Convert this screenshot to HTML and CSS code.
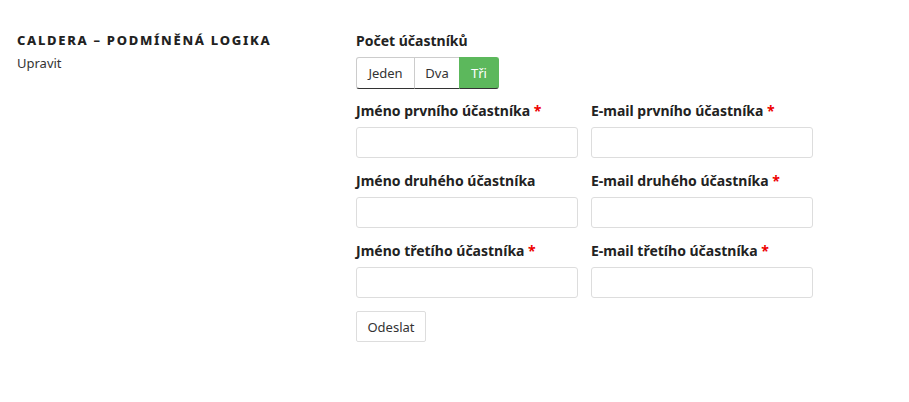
FILE: index.html
```html
<!DOCTYPE html>
<html lang="cs">
<head>
<meta charset="utf-8">
<title>Caldera – podmíněná logika</title>
<link rel="stylesheet" href="styles.css">
</head>
<body>
<div class="page">
  <header class="intro">
    <h1 class="title">Caldera – podmíněná logika</h1>
    <a class="edit" href="#">Upravit</a>
  </header>
  <form class="form">
    <div class="field">
      <div class="label">Počet účastníků</div>
      <div class="toggle">
        <button type="button" class="tbtn first">Jeden</button>
        <button type="button" class="tbtn second">Dva</button>
        <button type="button" class="tbtn last active">Tři</button>
      </div>
    </div>
    <div class="grid">
      <div class="cell">
        <label class="label">Jméno prvního účastníka <span class="req">*</span></label>
        <input class="input" type="text">
      </div>
      <div class="cell">
        <label class="label">E-mail prvního účastníka <span class="req">*</span></label>
        <input class="input" type="text">
      </div>
      <div class="cell">
        <label class="label">Jméno druhého účastníka</label>
        <input class="input" type="text">
      </div>
      <div class="cell">
        <label class="label">E-mail druhého účastníka <span class="req">*</span></label>
        <input class="input" type="text">
      </div>
      <div class="cell">
        <label class="label">Jméno třetího účastníka <span class="req">*</span></label>
        <input class="input" type="text">
      </div>
      <div class="cell">
        <label class="label">E-mail třetího účastníka <span class="req">*</span></label>
        <input class="input" type="text">
      </div>
    </div>
    <button type="button" class="submit">Odeslat</button>
  </form>
</div>
</body>
</html>
```
FILE: styles.css
```css
html, body {
  margin: 0;
  padding: 0;
  background: #fff;
}
body {
  font-family: "Noto Sans", "Liberation Sans", sans-serif;
  color: #222;
}
.page {
  display: flex;
  padding: 30px 0 0 17px;
}
.intro {
  width: 339px;
  flex: none;
}
.title {
  margin: 0;
  font-size: 13px;
  font-weight: 800;
  letter-spacing: 1.7px;
  text-transform: uppercase;
  color: #222;
  line-height: 20px;
}
.edit {
  display: block;
  margin-top: 4px;
  font-size: 13px;
  color: #333;
  text-decoration: none;
  line-height: 18px;
}
.form {
  width: 456px;
  padding-top: 1px;
}
.label {
  display: block;
  font-size: 14px;
  font-weight: 700;
  color: #222;
  line-height: 20px;
  margin-bottom: 6px;
}
.req {
  color: #e00;
}
.toggle {
  display: flex;
}
.tbtn {
  font-family: inherit;
  font-size: 13px;
  color: #333;
  background: #fff;
  border: 1px solid #ccc;
  border-bottom-color: #333;
  height: 32px;
  padding: 0;
  margin: 0 0 0 -1px;
}
.tbtn.first {
  margin-left: 0;
  border-radius: 3px 0 0 3px;
  width: 59px;
}
.tbtn.second {
  width: 46px;
}
.tbtn.last {
  border-radius: 0 3px 3px 0;
  width: 40px;
}
.tbtn.active {
  background: #5cb85c;
  border-color: #5cb85c;
  border-bottom-color: #333;
  color: #fff;
}
.grid {
  display: grid;
  grid-template-columns: 222px 222px;
  column-gap: 13px;
  row-gap: 13px;
  margin-top: 12px;
}
.input {
  display: block;
  box-sizing: border-box;
  width: 222px;
  height: 31px;
  border: 1px solid #ddd;
  border-radius: 3px;
  background: #fff;
  margin: 0;
}
.submit {
  margin-top: 13px;
  font-family: inherit;
  font-size: 13px;
  color: #333;
  background: #fff;
  border: 1px solid #ddd;
  border-radius: 2px;
  width: 70px;
  height: 31px;
  padding: 0;
}
```
